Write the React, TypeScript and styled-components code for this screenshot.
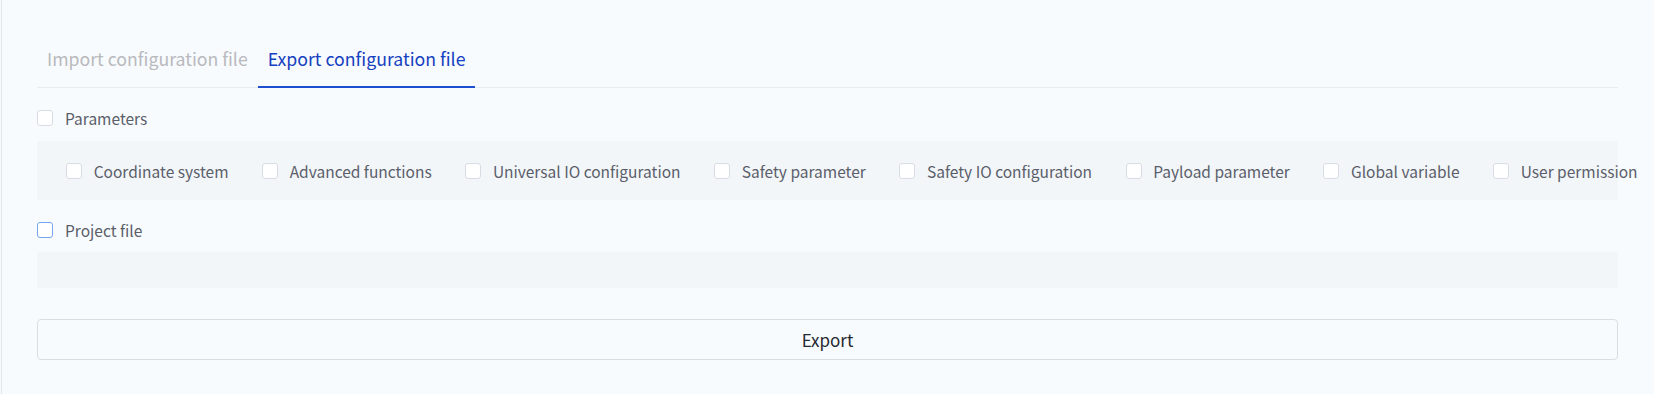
import styled, { createGlobalStyle } from "styled-components";

const GlobalStyle = createGlobalStyle`
  html, body {
    margin: 0;
    padding: 0;
    background: #f7fbfe;
  }
  body {
    font-family: "Noto Sans CJK SC", "Noto Sans", sans-serif;
  }
`;

const Page = styled.div`
  margin-left: 1px;
  border-left: 1px solid #e2e6eb;
  min-height: 394px;
  box-sizing: border-box;
  padding: 36px 36px 0 35px;
`;

const TabNav = styled.div`
  display: flex;
  border-bottom: 1px solid #e8ebef;
`;

const Tab = styled.div<{ $active?: boolean }>`
  padding: 10px 10px 16px;
  font-size: 17.7px;
  line-height: 24px;
  color: ${(p) => (p.$active ? "#1540c0" : "#b9b9bd")};
  margin-bottom: -1px;
  border-bottom: 2px solid ${(p) => (p.$active ? "#1d4fd0" : "transparent")};
  cursor: pointer;
`;

const Row = styled.label<{ $top: number }>`
  display: flex;
  align-items: center;
  gap: 12px;
  height: 32px;
  margin-top: ${(p) => p.$top}px;
  font-size: 15.5px;
  color: #5b5e6a;
`;

const Box = styled.span<{ $focused?: boolean }>`
  width: 16px;
  height: 16px;
  box-sizing: border-box;
  flex: none;
  border: 1px solid ${(p) => (p.$focused ? "#74a6f0" : "#d8dce5")};
  border-radius: 3px;
  background: #fff;
`;

const Panel = styled.div<{ $height: number; $top: number }>`
  display: flex;
  align-items: center;
  height: ${(p) => p.$height}px;
  margin-top: ${(p) => p.$top}px;
  padding-left: 29px;
  background: #f2f6f9;
  white-space: nowrap;
`;

const Item = styled.label`
  display: flex;
  align-items: center;
  gap: 11.7px;
  margin-right: 33.5px;
  font-size: 15.5px;
  color: #5b5e6a;
  flex: none;
`;

const ExportButton = styled.button`
  display: block;
  width: 100%;
  height: 41px;
  margin-top: 31px;
  border: 1px solid #dadde4;
  border-radius: 4px;
  background: transparent;
  font-family: inherit;
  font-size: 17px;
  color: #262830;
  cursor: pointer;
`;

const parametros = [
  "Coordinate system",
  "Advanced functions",
  "Universal IO configuration",
  "Safety parameter",
  "Safety IO configuration",
  "Payload parameter",
  "Global variable",
  "User permission",
];

export default function App() {
  return (
    <>
      <GlobalStyle />
      <Page>
        <TabNav>
          <Tab>Import configuration file</Tab>
          <Tab $active>Export configuration file</Tab>
        </TabNav>

        <Row $top={14}>
          <Box />
          Parameters
        </Row>
        <Panel $height={59} $top={7}>
          {parametros.map((ten) => (
            <Item key={ten}>
              <Box />
              {ten}
            </Item>
          ))}
        </Panel>

        <Row $top={14}>
          <Box $focused />
          Project file
        </Row>
        <Panel $height={36} $top={6} />

        <ExportButton>Export</ExportButton>
      </Page>
    </>
  );
}
